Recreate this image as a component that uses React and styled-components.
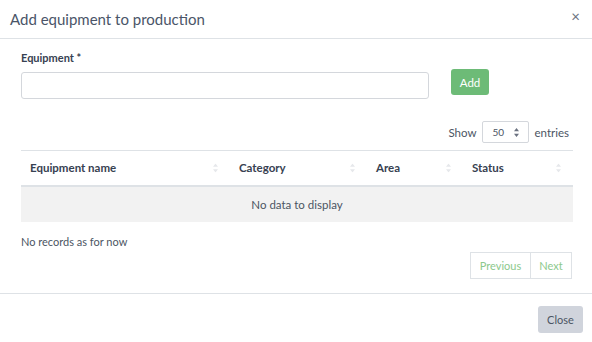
import React from "react";
import styled, { createGlobalStyle } from "styled-components";

const GlobalStyle = createGlobalStyle`
  body {
    margin: 0;
    background: #fff;
    font-family: Lato, "Liberation Sans", sans-serif;
    color: #4b5563;
  }
`;

const Modal = styled.div`
  width: 592px;
  height: 342px;
  background: #fff;
  display: flex;
  flex-direction: column;
`;

const Header = styled.div`
  height: 39px;
  border-bottom: 1px solid #dee2e6;
  display: flex;
  align-items: center;
  justify-content: space-between;
  padding: 0 12px 0 10px;
  box-sizing: border-box;
`;

const Title = styled.h5`
  margin: 0;
  font-size: 15px;
  font-weight: 400;
  color: #4a5568;
`;

const CloseX = styled.span`
  font-size: 15px;
  color: #6b7280;
  line-height: 1;
  margin-top: -5px;
`;

const Body = styled.div`
  flex: 1;
  padding: 12px 19px 0 21px;
`;

const FormRow = styled.div`
  display: flex;
  align-items: flex-start;
`;

const Field = styled.div`
  width: 408px;
`;

const Label = styled.label`
  display: block;
  font-size: 11px;
  font-weight: 700;
  color: #374151;
  margin-bottom: 7px;
  height: 14px;
`;

const Input = styled.input`
  display: block;
  box-sizing: border-box;
  width: 100%;
  height: 27px;
  border: 1px solid #d4d7dc;
  border-radius: 3px;
  outline: none;
`;

const AddButton = styled.button`
  margin: 18px 0 0 22px;
  width: 38px;
  height: 26px;
  border: none;
  border-radius: 3px;
  background: #6dbb77;
  color: #fff;
  font-family: inherit;
  font-size: 11.5px;
  padding: 0;
`;

const LengthRow = styled.div`
  display: flex;
  justify-content: flex-end;
  align-items: center;
  margin-top: 22px;
  padding-right: 4px;
  font-size: 11.5px;
  color: #4b5563;
  gap: 4px;
`;

const Select = styled.div`
  box-sizing: border-box;
  width: 47px;
  height: 22px;
  margin: 0 1px 0 2px;
  border: 1px solid #d4d7dc;
  border-radius: 2px;
  display: flex;
  align-items: center;
  justify-content: space-between;
  padding: 0 9px 0 9px;
  font-size: 10px;
  color: #4b5563;
`;

const Table = styled.table`
  width: 100%;
  table-layout: fixed;
  border-collapse: collapse;
  margin-top: 7px;
  border-top: 1px solid #dee2e6;
  font-size: 11.5px;
`;

const Th = styled.th`
  box-sizing: border-box;
  text-align: left;
  font-weight: 700;
  color: #374151;
  height: 35px;
  padding: 0 9px;
  border-bottom: 2px solid #dee2e6;
  width: ${(p) => p.$w};
  position: relative;
`;

const SortIcon = styled.svg`
  position: absolute;
  right: 12px;
  top: 50%;
  transform: translateY(-50%);
`;

const EmptyCell = styled.td`
  background: #f2f2f2;
  height: 33px;
  text-align: center;
  color: #4b5563;
`;

const Info = styled.div`
  margin-top: 13px;
  font-size: 11px;
  color: #4b5563;
`;

const Pager = styled.div`
  display: flex;
  justify-content: flex-end;
  margin-top: 4px;
  padding-right: 1px;
`;

const PageBtn = styled.span`
  box-sizing: border-box;
  height: 27px;
  width: ${(p) => p.$w}px;
  justify-content: center;
  display: flex;
  align-items: center;
  border: 1px solid #dee2e6;
  margin-left: -1px;
  font-size: 11px;
  color: #8cc98c;
`;

const Footer = styled.div`
  height: 49px;
  border-top: 1px solid #dee2e6;
  display: flex;
  justify-content: flex-end;
  align-items: center;
  padding-right: 9px;
  box-sizing: border-box;
`;

const CloseButton = styled.button`
  width: 45px;
  height: 27px;
  border: none;
  border-radius: 3px;
  background: #d0d4dc;
  color: #4b5563;
  font-family: inherit;
  font-size: 11px;
  padding: 0;
  margin-top: 3px;
`;

const UpDown = ({ color, className }) => (
  <svg className={className} width="5" height="9" viewBox="0 0 5 9">
    <path d="M2.5 0 L5 3.3 H0 Z M2.5 9 L5 5.7 H0 Z" fill={color} />
  </svg>
);

const columns = [
  { name: "Equipment name", w: "209px" },
  { name: "Category", w: "137px" },
  { name: "Area", w: "96px" },
  { name: "Status", w: "auto" },
];

export default function App() {
  return (
    <>
      <GlobalStyle />
      <Modal>
        <Header>
          <Title>Add equipment to production</Title>
          <CloseX>×</CloseX>
        </Header>
        <Body>
          <FormRow>
            <Field>
              <Label>Equipment *</Label>
              <Input />
            </Field>
            <AddButton>Add</AddButton>
          </FormRow>
          <LengthRow>
            Show
            <Select>
              <span>50</span>
              <UpDown color="#6b7280" />
            </Select>
            entries
          </LengthRow>
          <Table>
            <thead>
              <tr>
                {columns.map((c) => (
                  <Th key={c.name} $w={c.w}>
                    {c.name}
                    <SortIcon as={UpDown} color="#e6e8eb" />
                  </Th>
                ))}
              </tr>
            </thead>
            <tbody>
              <tr>
                <EmptyCell colSpan={4}>No data to display</EmptyCell>
              </tr>
            </tbody>
          </Table>
          <Info>No records as for now</Info>
          <Pager>
            <PageBtn $w={61}>Previous</PageBtn>
            <PageBtn $w={42}>Next</PageBtn>
          </Pager>
        </Body>
        <Footer>
          <CloseButton>Close</CloseButton>
        </Footer>
      </Modal>
    </>
  );
}
